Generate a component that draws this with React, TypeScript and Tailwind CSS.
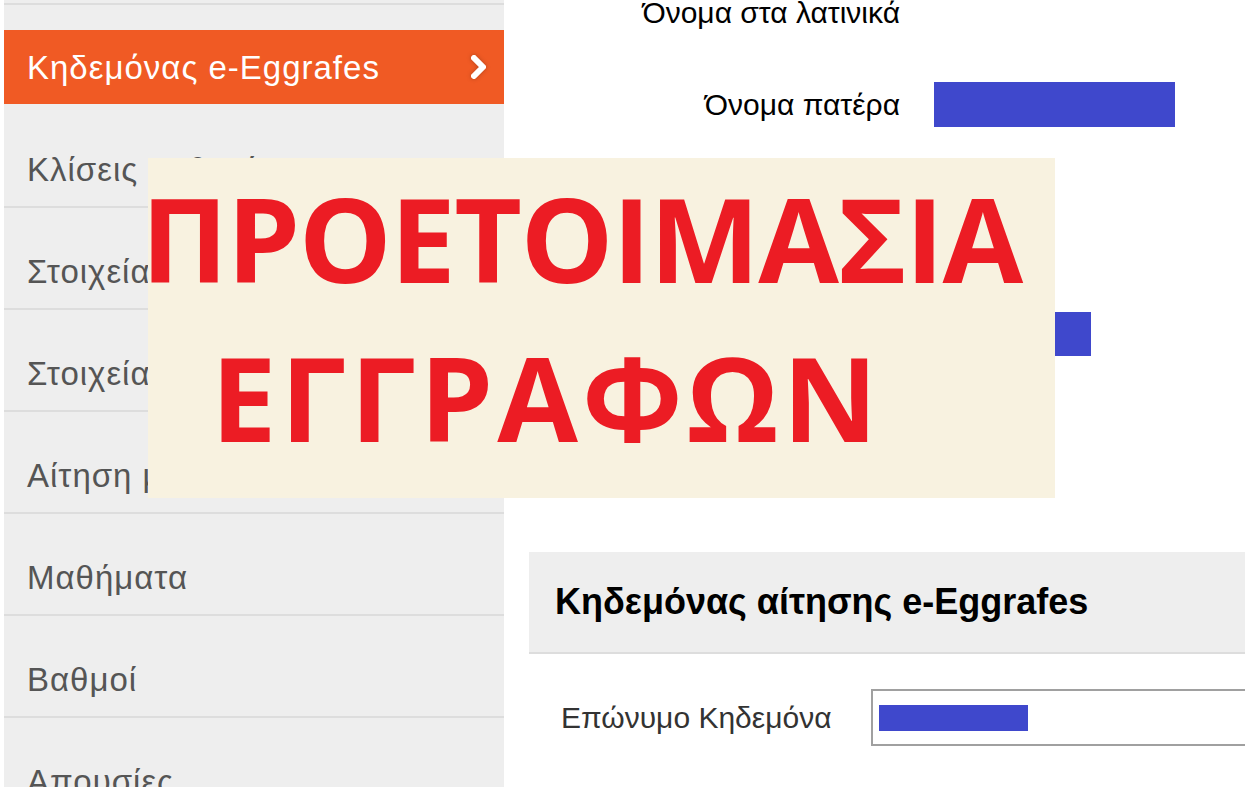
import React from "react";

const items = ["Κλίσεις μαθητή", "Στοιχεία μαθητή", "Στοιχεία κηδεμόνα", "Αίτηση μετεγγραφής", "Μαθήματα", "Βαθμοί", "Απουσίες"];

function Chevron() {
  return (
    <svg width="22" height="28" viewBox="0 0 22 28" className="drop-shadow-[0_0_2px_rgba(0,0,0,0.25)]">
      <polyline points="6,5 15,14 6,23" fill="none" stroke="#ffffff" strokeWidth="6" strokeLinecap="round" strokeLinejoin="round" />
    </svg>
  );
}

export default function App() {
  return (
    <div className="relative w-[1245px] h-[787px] overflow-hidden bg-white font-['Liberation_Sans',Arial,sans-serif]">
      <div className="flex h-full">
        {/* sidebar */}
        <aside className="ml-[4px] w-[500px] shrink-0 bg-[#eeeeee] flex flex-col">
          <div className="h-[3px] shrink-0" />
          <div className="h-[2px] shrink-0 bg-[#dddddd]" />
          <div className="h-[25px] shrink-0" />
          <div className="h-[74px] shrink-0 bg-[#f05a24] flex items-center justify-between pl-[23px] pr-[14px]">
            <span className="text-[33px] tracking-[1px] text-white leading-none">Κηδεμόνας e-Eggrafes</span>
            <Chevron />
          </div>
          <div className="h-[2px] shrink-0" />
          {items.map((label) => (
            <div key={label} className="h-[102px] shrink-0 border-b-2 border-[#dddddd] pt-[46px] pl-[23px]">
              <span className="text-[33px] tracking-[1px] leading-[36px] text-[#555555] whitespace-nowrap">{label}</span>
            </div>
          ))}
        </aside>

        {/* main form */}
        <main className="flex-1 pl-[25px] flex flex-col">
          <div className="mt-[-10px] h-[45px] shrink-0 flex items-center gap-[34px]">
            <label className="w-[371px] text-right text-[30px] text-black whitespace-nowrap">Όνομα στα λατινικά</label>
          </div>
          <div className="mt-[47px] h-[45px] shrink-0 flex items-center gap-[34px]">
            <label className="w-[371px] text-right text-[30px] text-black">Όνομα πατέρα</label>
            <div className="w-[241px] h-[45px] bg-[#3f48cc]" />
          </div>
          <div className="mt-[70px] h-[45px] shrink-0 flex items-center gap-[34px]">
            <label className="w-[371px] text-right text-[30px] text-black">Όνομα μητέρας</label>
            <div className="w-[241px] h-[45px] bg-white" />
          </div>
          <div className="mt-[70px] h-[44px] shrink-0 flex items-center gap-[34px]">
            <label className="w-[371px] text-right text-[30px] text-black">Επώνυμο μητέρας</label>
            <div className="w-[157px] h-[44px] bg-[#3f48cc]" />
          </div>
          <section className="mt-[196px] h-[102px] shrink-0 bg-[#eeeeee] border-b-2 border-[#dddddd] flex items-center pl-[26px]">
            <h2 className="text-[36px] font-bold text-black whitespace-nowrap">Κηδεμόνας αίτησης e-Eggrafes</h2>
          </section>
          <div className="mt-[35px] shrink-0 flex items-center">
            <label className="w-[342px] pl-[32px] text-[30px] text-[#333333] whitespace-nowrap">Επώνυμο Κηδεμόνα</label>
            <div className="flex-1 h-[57px] border-2 border-[#a0a0a0] border-r-0 flex items-center pl-[6px]">
              <div className="w-[149px] h-[26px] bg-[#3f48cc]" />
            </div>
          </div>
        </main>
      </div>

      {/* overlay banner */}
      <div className="absolute left-[148px] top-[158px] w-[907px] h-[340px] bg-[#f8f2e0] font-['Open_Sans',sans-serif] font-bold text-[#ec1c24] leading-none">
        <div className="mt-[21px] -ml-[7px] text-[117px] tracking-[-1.5px] whitespace-nowrap">ΠΡΟΕΤΟΙΜΑΣΙΑ</div>
        <div className="mt-[42px] pl-[63px] text-[117px] tracking-[4px] whitespace-nowrap">ΕΓΓΡΑΦΩΝ</div>
      </div>
    </div>
  );
}
